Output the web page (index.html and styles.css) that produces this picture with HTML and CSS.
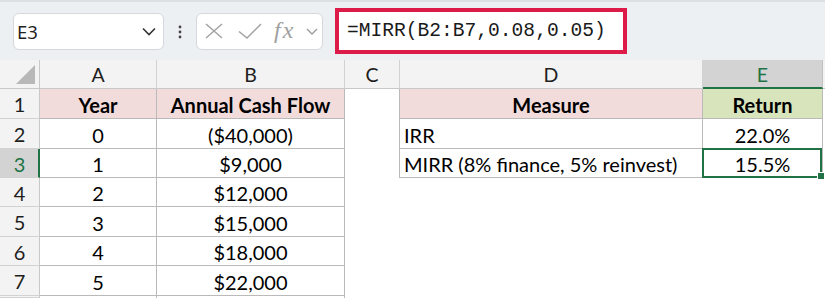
FILE: index.html
```html
<!DOCTYPE html>
<html>
<head>
<meta charset="utf-8">
<link rel="stylesheet" href="styles.css">
</head>
<body>
<div class="app">
  <div class="fbar">
    <div class="namebox">
      <span class="nb-text">E3</span>
      <svg class="nb-chev" width="14" height="9" viewBox="0 0 14 9"><polyline points="1,1.5 7,7.5 13,1.5" fill="none" stroke="#333" stroke-width="1.6"/></svg>
    </div>
    <div class="dots">
      <svg width="4" height="14" viewBox="0 0 4 14"><circle cx="2" cy="2" r="1.4" fill="#444"/><circle cx="2" cy="7" r="1.4" fill="#444"/><circle cx="2" cy="12" r="1.4" fill="#444"/></svg>
    </div>
    <div class="fnbox">
      <svg class="ic-x" width="18" height="16" viewBox="0 0 18 16"><path d="M1 1 L17 15 M17 1 L1 15" stroke="#a3a3a3" stroke-width="1.5" fill="none"/></svg>
      <svg class="ic-ok" width="24" height="16" viewBox="0 0 24 16"><polyline points="1,8.5 9,15 23,1" fill="none" stroke="#a3a3a3" stroke-width="1.5"/></svg>
      <span class="fx">fx</span>
      <svg class="ic-chev" width="12" height="7" viewBox="0 0 12 7"><polyline points="1,1 6,6 11,1" fill="none" stroke="#9a9a9a" stroke-width="1.3"/></svg>
    </div>
    <div class="formula">=MIRR(B2:B7,0.08,0.05)</div>
  </div>

  <div class="sheet">
    <div class="corner"><svg width="40" height="29" viewBox="0 0 40 29"><polygon points="35,5 35,24 16,24" fill="#b8b8b8"/></svg></div>
    <div class="ch">A</div>
    <div class="ch">B</div>
    <div class="ch">C</div>
    <div class="ch">D</div>
    <div class="ch ch-sel">E</div>
    <div class="ch ch-end"></div>

    <div class="rh">1</div>
    <div class="cell ctr bold pink">Year</div>
    <div class="cell ctr bold pink">Annual Cash Flow</div>
    <div class="gap gap-br"></div>
    <div class="cell ctr bold pink">Measure</div>
    <div class="cell ctr bold green">Return</div>
    <div class="pad"></div>

    <div class="rh">2</div>
    <div class="cell ctr">0</div>
    <div class="cell ctr">($40,000)</div>
    <div class="gap gap-br"></div>
    <div class="cell lft">IRR</div>
    <div class="cell ctr">22.0%</div>
    <div class="pad"></div>

    <div class="rh rh-sel">3</div>
    <div class="cell ctr">1</div>
    <div class="cell ctr">$9,000</div>
    <div class="gap gap-br"></div>
    <div class="cell lft">MIRR (8% finance, 5% reinvest)</div>
    <div class="cell ctr active">15.5%<span class="selbox"></span><span class="handle"></span></div>
    <div class="pad"></div>

    <div class="rh">4</div>
    <div class="cell ctr">2</div>
    <div class="cell ctr">$12,000</div>
    <div class="gap"></div>
    <div class="gap"></div>
    <div class="gap"></div>
    <div class="pad"></div>

    <div class="rh">5</div>
    <div class="cell ctr">3</div>
    <div class="cell ctr">$15,000</div>
    <div class="gap"></div>
    <div class="gap"></div>
    <div class="gap"></div>
    <div class="pad"></div>

    <div class="rh">6</div>
    <div class="cell ctr">4</div>
    <div class="cell ctr">$18,000</div>
    <div class="gap"></div>
    <div class="gap"></div>
    <div class="gap"></div>
    <div class="pad"></div>

    <div class="rh">7</div>
    <div class="cell ctr">5</div>
    <div class="cell ctr">$22,000</div>
    <div class="gap"></div>
    <div class="gap"></div>
    <div class="gap"></div>
    <div class="pad"></div>

    <div class="rh"></div>
    <div class="cell"></div>
    <div class="cell"></div>
    <div class="gap"></div>
    <div class="gap"></div>
    <div class="gap"></div>
    <div class="pad"></div>
  </div>
</div>
</body>
</html>
```

FILE: styles.css
```css
* { box-sizing: border-box; }
html, body { margin: 0; padding: 0; background: #ffffff; }
body { width: 825px; height: 298px; overflow: hidden; }

.app { width: 825px; height: 298px; display: flex; flex-direction: column; overflow: hidden; }

/* formula bar */
.fbar {
  height: 60px;
  flex: none;
  background: #edf0f3;
  border-top: 2px solid #dcdfe3;
  display: flex;
  align-items: center;
  padding-left: 13px;
}
.namebox {
  width: 151px;
  height: 37px;
  background: #ffffff;
  border: 1px solid #d5d8dc;
  border-radius: 6px;
  display: flex;
  align-items: center;
  justify-content: space-between;
  padding: 0 7px 0 3px;
}
.nb-text {
  font-family: "Noto Sans", sans-serif;
  font-size: 18.5px;
  color: #1f1f1f;
}
.dots {
  width: 32px;
  display: flex;
  justify-content: center;
  padding-top: 1px;
}
.fnbox {
  width: 127px;
  height: 37px;
  background: #ffffff;
  border: 1px solid #d5d8dc;
  border-radius: 6px;
  display: flex;
  align-items: center;
  padding-left: 8px;
}
.ic-x { margin-right: 15px; }
.ic-ok { margin-right: 12px; margin-top: -1px; }
.fx {
  font-family: "Liberation Serif", serif;
  font-style: italic;
  font-size: 24px;
  color: #a0a0a0;
  letter-spacing: 2px;
  width: 23px;
  margin-right: 9px;
  line-height: 1;
  margin-top: -3px;
}
.ic-chev { margin-top: 1px; }
.formula {
  margin-left: 12px;
  width: 292px;
  height: 46px;
  border: 4px solid #dc1b48;
  background: #ffffff;
  display: flex;
  align-items: center;
  padding-left: 8px;
  font-family: "Liberation Mono", monospace;
  font-size: 19.6px;
  color: #1a1a1a;
}

/* grid */
.sheet {
  flex: 1;
  min-height: 0;
  display: grid;
  grid-template-columns: 40px 117px 188px 55px 303px 120px 2px;
  grid-template-rows: 29px 30px 30px 29px 29px 30px 29px 30px 2px;
  font-family: "Lato", sans-serif;
  font-size: 20px;
  color: #000000;
}
.corner {
  background: #f3f3f3;
  border-right: 1px solid #c8c8c8;
  border-bottom: 1px solid #c8c8c8;
}
.corner svg { display: block; }
.ch {
  background: #f3f3f3;
  border-right: 1px solid #d2d2d2;
  border-bottom: 1px solid #c8c8c8;
  display: flex;
  align-items: center;
  justify-content: center;
  color: #1e1e1e;
  font-size: 19.5px;
  padding-top: 1px;
}
.ch-sel {
  background: #d3d3d3;
  color: #217346;
  border-bottom: 2px solid #217346;
  border-right-color: #c0c0c0;
}
.ch-end { border-right: none; }
.rh {
  background: #f3f3f3;
  border-right: 1px solid #c8c8c8;
  border-bottom: 1px solid #d2d2d2;
  display: flex;
  align-items: center;
  justify-content: center;
  color: #1e1e1e;
  padding-top: 1px;
}
.rh-sel {
  background: #d3d3d3;
  color: #217346;
  border-right: 2px solid #217346;
  padding-left: 1px;
}
.cell {
  border-right: 1px solid #bababa;
  border-bottom: 1px solid #bababa;
  display: flex;
  align-items: center;
  padding-top: 2px;
  white-space: nowrap;
}
.ctr { justify-content: center; }
.lft { justify-content: flex-start; padding-left: 4px; }
.bold { font-weight: 700; }
.pink { background: #f2dcdb; }
.green { background: #d8e4bc; }
.gap-br { border-right: 1px solid #bababa; }
.active { position: relative; }
.selbox {
  position: absolute;
  left: -1px;
  top: -1px;
  width: 120px;
  height: 30px;
  border: 2px solid #217346;
  z-index: 2;
}
.handle {
  position: absolute;
  left: 114px;
  top: 23px;
  width: 8px;
  height: 8px;
  background: #217346;
  border: 1px solid #ffffff;
  z-index: 3;
}
```
